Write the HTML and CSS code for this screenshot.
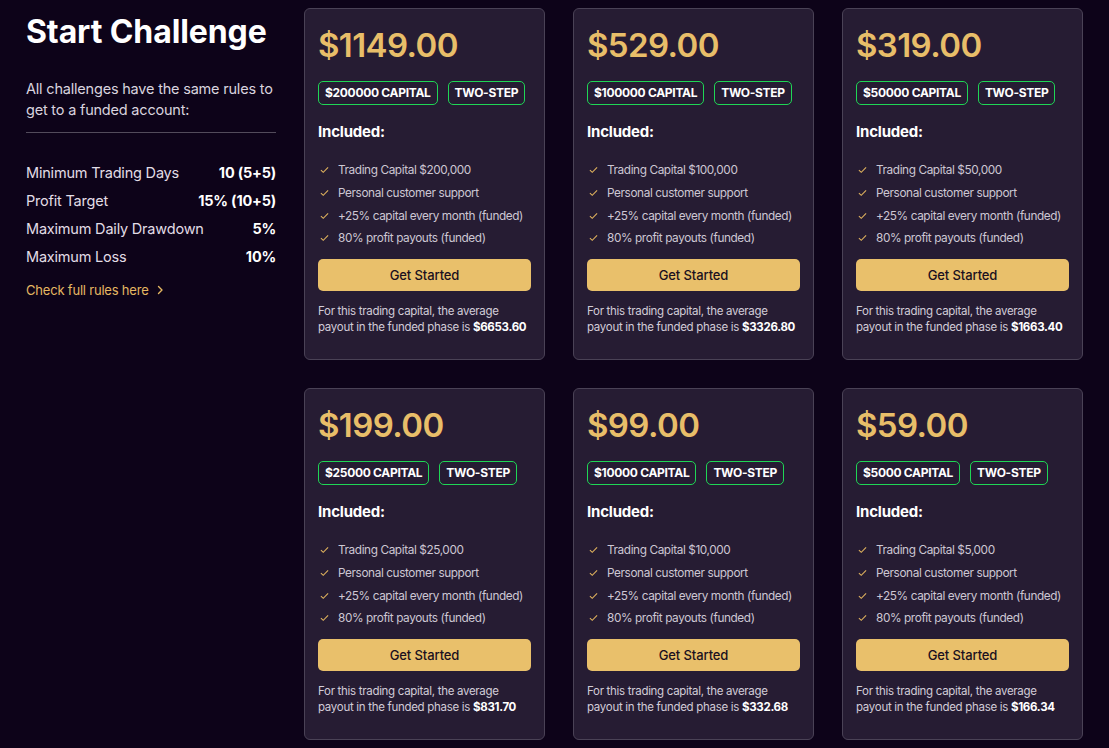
FILE: index.html
```html
<!DOCTYPE html>
<html>
<head>
<meta charset="utf-8">
<link rel="stylesheet" href="styles.css">
</head>
<body>
<div class="page">
  <aside class="intro">
    <h1 class="title">Start Challenge</h1>
    <p class="lead">All challenges have the same rules to get to a funded account:</p>
    <div class="divider"></div>
    <dl class="rules">
      <div class="rule"><dt>Minimum Trading Days</dt><dd>10 (5+5)</dd></div>
      <div class="rule"><dt>Profit Target</dt><dd>15% (10+5)</dd></div>
      <div class="rule"><dt>Maximum Daily Drawdown</dt><dd>5%</dd></div>
      <div class="rule"><dt>Maximum Loss</dt><dd>10%</dd></div>
    </dl>
    <a class="rules-link" href="#">Check full rules here <svg width="9" height="10" viewBox="0 0 9 10"><path d="M2.5 1.5 L6 5 L2.5 8.5" fill="none" stroke="currentColor" stroke-width="1.4" stroke-linecap="round" stroke-linejoin="round"/></svg></a>
  </aside>

  <main class="grid">
    <section class="card">
      <div class="price">$1149.00</div>
      <div class="badges"><span class="badge">$200000 CAPITAL</span><span class="badge">TWO-STEP</span></div>
      <h3 class="inc">Included:</h3>
      <ul class="list">
        <li><svg class="chk" viewBox="0 0 10 8"><path d="M1 4.2 L3.6 6.6 L9 1.2" fill="none" stroke="currentColor" stroke-width="1.2"/></svg><span>Trading Capital $200,000</span></li>
        <li><svg class="chk" viewBox="0 0 10 8"><path d="M1 4.2 L3.6 6.6 L9 1.2" fill="none" stroke="currentColor" stroke-width="1.2"/></svg><span>Personal customer support</span></li>
        <li><svg class="chk" viewBox="0 0 10 8"><path d="M1 4.2 L3.6 6.6 L9 1.2" fill="none" stroke="currentColor" stroke-width="1.2"/></svg><span>+25% capital every month (funded)</span></li>
        <li><svg class="chk" viewBox="0 0 10 8"><path d="M1 4.2 L3.6 6.6 L9 1.2" fill="none" stroke="currentColor" stroke-width="1.2"/></svg><span>80% profit payouts (funded)</span></li>
      </ul>
      <button class="btn">Get Started</button>
      <p class="note"><span>For this trading capital, the average payout in the funded phase is</span> <b>$6653.60</b></p>
    </section>

    <section class="card">
      <div class="price">$529.00</div>
      <div class="badges"><span class="badge">$100000 CAPITAL</span><span class="badge">TWO-STEP</span></div>
      <h3 class="inc">Included:</h3>
      <ul class="list">
        <li><svg class="chk" viewBox="0 0 10 8"><path d="M1 4.2 L3.6 6.6 L9 1.2" fill="none" stroke="currentColor" stroke-width="1.2"/></svg><span>Trading Capital $100,000</span></li>
        <li><svg class="chk" viewBox="0 0 10 8"><path d="M1 4.2 L3.6 6.6 L9 1.2" fill="none" stroke="currentColor" stroke-width="1.2"/></svg><span>Personal customer support</span></li>
        <li><svg class="chk" viewBox="0 0 10 8"><path d="M1 4.2 L3.6 6.6 L9 1.2" fill="none" stroke="currentColor" stroke-width="1.2"/></svg><span>+25% capital every month (funded)</span></li>
        <li><svg class="chk" viewBox="0 0 10 8"><path d="M1 4.2 L3.6 6.6 L9 1.2" fill="none" stroke="currentColor" stroke-width="1.2"/></svg><span>80% profit payouts (funded)</span></li>
      </ul>
      <button class="btn">Get Started</button>
      <p class="note"><span>For this trading capital, the average payout in the funded phase is</span> <b>$3326.80</b></p>
    </section>

    <section class="card">
      <div class="price">$319.00</div>
      <div class="badges"><span class="badge">$50000 CAPITAL</span><span class="badge">TWO-STEP</span></div>
      <h3 class="inc">Included:</h3>
      <ul class="list">
        <li><svg class="chk" viewBox="0 0 10 8"><path d="M1 4.2 L3.6 6.6 L9 1.2" fill="none" stroke="currentColor" stroke-width="1.2"/></svg><span>Trading Capital $50,000</span></li>
        <li><svg class="chk" viewBox="0 0 10 8"><path d="M1 4.2 L3.6 6.6 L9 1.2" fill="none" stroke="currentColor" stroke-width="1.2"/></svg><span>Personal customer support</span></li>
        <li><svg class="chk" viewBox="0 0 10 8"><path d="M1 4.2 L3.6 6.6 L9 1.2" fill="none" stroke="currentColor" stroke-width="1.2"/></svg><span>+25% capital every month (funded)</span></li>
        <li><svg class="chk" viewBox="0 0 10 8"><path d="M1 4.2 L3.6 6.6 L9 1.2" fill="none" stroke="currentColor" stroke-width="1.2"/></svg><span>80% profit payouts (funded)</span></li>
      </ul>
      <button class="btn">Get Started</button>
      <p class="note"><span>For this trading capital, the average payout in the funded phase is</span> <b>$1663.40</b></p>
    </section>

    <section class="card">
      <div class="price">$199.00</div>
      <div class="badges"><span class="badge">$25000 CAPITAL</span><span class="badge">TWO-STEP</span></div>
      <h3 class="inc">Included:</h3>
      <ul class="list">
        <li><svg class="chk" viewBox="0 0 10 8"><path d="M1 4.2 L3.6 6.6 L9 1.2" fill="none" stroke="currentColor" stroke-width="1.2"/></svg><span>Trading Capital $25,000</span></li>
        <li><svg class="chk" viewBox="0 0 10 8"><path d="M1 4.2 L3.6 6.6 L9 1.2" fill="none" stroke="currentColor" stroke-width="1.2"/></svg><span>Personal customer support</span></li>
        <li><svg class="chk" viewBox="0 0 10 8"><path d="M1 4.2 L3.6 6.6 L9 1.2" fill="none" stroke="currentColor" stroke-width="1.2"/></svg><span>+25% capital every month (funded)</span></li>
        <li><svg class="chk" viewBox="0 0 10 8"><path d="M1 4.2 L3.6 6.6 L9 1.2" fill="none" stroke="currentColor" stroke-width="1.2"/></svg><span>80% profit payouts (funded)</span></li>
      </ul>
      <button class="btn">Get Started</button>
      <p class="note"><span>For this trading capital, the average payout in the funded phase is</span> <b>$831.70</b></p>
    </section>

    <section class="card">
      <div class="price">$99.00</div>
      <div class="badges"><span class="badge">$10000 CAPITAL</span><span class="badge">TWO-STEP</span></div>
      <h3 class="inc">Included:</h3>
      <ul class="list">
        <li><svg class="chk" viewBox="0 0 10 8"><path d="M1 4.2 L3.6 6.6 L9 1.2" fill="none" stroke="currentColor" stroke-width="1.2"/></svg><span>Trading Capital $10,000</span></li>
        <li><svg class="chk" viewBox="0 0 10 8"><path d="M1 4.2 L3.6 6.6 L9 1.2" fill="none" stroke="currentColor" stroke-width="1.2"/></svg><span>Personal customer support</span></li>
        <li><svg class="chk" viewBox="0 0 10 8"><path d="M1 4.2 L3.6 6.6 L9 1.2" fill="none" stroke="currentColor" stroke-width="1.2"/></svg><span>+25% capital every month (funded)</span></li>
        <li><svg class="chk" viewBox="0 0 10 8"><path d="M1 4.2 L3.6 6.6 L9 1.2" fill="none" stroke="currentColor" stroke-width="1.2"/></svg><span>80% profit payouts (funded)</span></li>
      </ul>
      <button class="btn">Get Started</button>
      <p class="note"><span>For this trading capital, the average payout in the funded phase is</span> <b>$332.68</b></p>
    </section>

    <section class="card">
      <div class="price">$59.00</div>
      <div class="badges"><span class="badge">$5000 CAPITAL</span><span class="badge">TWO-STEP</span></div>
      <h3 class="inc">Included:</h3>
      <ul class="list">
        <li><svg class="chk" viewBox="0 0 10 8"><path d="M1 4.2 L3.6 6.6 L9 1.2" fill="none" stroke="currentColor" stroke-width="1.2"/></svg><span>Trading Capital $5,000</span></li>
        <li><svg class="chk" viewBox="0 0 10 8"><path d="M1 4.2 L3.6 6.6 L9 1.2" fill="none" stroke="currentColor" stroke-width="1.2"/></svg><span>Personal customer support</span></li>
        <li><svg class="chk" viewBox="0 0 10 8"><path d="M1 4.2 L3.6 6.6 L9 1.2" fill="none" stroke="currentColor" stroke-width="1.2"/></svg><span>+25% capital every month (funded)</span></li>
        <li><svg class="chk" viewBox="0 0 10 8"><path d="M1 4.2 L3.6 6.6 L9 1.2" fill="none" stroke="currentColor" stroke-width="1.2"/></svg><span>80% profit payouts (funded)</span></li>
      </ul>
      <button class="btn">Get Started</button>
      <p class="note"><span>For this trading capital, the average payout in the funded phase is</span> <b>$166.34</b></p>
    </section>
  </main>
</div>
</body>
</html>
```

FILE: styles.css
```css
* { box-sizing: border-box; }
html, body { margin: 0; padding: 0; }
body {
  background: #0d0319;
  color: #ffffff;
  font-family: "Inter", "Lato", sans-serif;
  width: 1109px;
  height: 748px;
  overflow: hidden;
}
.page {
  display: flex;
  align-items: flex-start;
  padding: 8px 0 0 26px;
  gap: 28px;
}
.intro {
  width: 250px;
  flex: none;
}
.title {
  margin: 0;
  padding-top: 5px;
  font-size: 32px;
  font-weight: 700;
  line-height: 38px;
  letter-spacing: -0.1px;
}
.lead {
  margin: 27px 0 0;
  font-size: 14.5px;
  line-height: 21px;
  color: #d9d3df;
  letter-spacing: -0.2px;
}
.divider {
  height: 1px;
  background: #524b5b;
  margin-top: 12px;
}
.rules {
  margin: 26px 0 0;
}
.rule {
  display: flex;
  justify-content: space-between;
  height: 27.8px;
  align-items: center;
  font-size: 14.5px;
  letter-spacing: -0.2px;
}
.rule dt { color: #e2dde6; }
.rule dd { margin: 0; font-weight: 700; color: #fff; }
.rules-link {
  display: inline-flex;
  align-items: center;
  gap: 7px;
  margin-top: 12px;
  font-size: 13px;
  color: #e5b862;
  text-decoration: none;
  letter-spacing: -0.2px;
}
.grid {
  display: grid;
  grid-template-columns: repeat(3, 241px);
  gap: 28px 28px;
}
.card {
  background: #261c33;
  border: 1px solid #4a4256;
  border-radius: 6px;
  height: 352px;
  padding: 14px 13px 0;
}
.price {
  font-size: 33px;
  font-weight: 600;
  color: #e8be69;
  line-height: 44px;
  letter-spacing: -0.6px;
}
.badges {
  display: flex;
  gap: 10px;
  margin-top: 14px;
}
.badge {
  border: 1.5px solid #1fd655;
  border-radius: 5px;
  font-size: 12px;
  font-weight: 700;
  height: 24px;
  line-height: 21px;
  padding: 0 6px;
  color: #fff;
  letter-spacing: -0.3px;
  white-space: nowrap;
}
.inc {
  margin: 15px 0 0;
  font-size: 15px;
  font-weight: 700;
  line-height: 24px;
  letter-spacing: -0.2px;
}
.list {
  list-style: none;
  padding: 0;
  margin: 15px 0 0;
}
.list li {
  display: flex;
  align-items: center;
  height: 22.7px;
  font-size: 11.8px;
  color: #cdc7d3;
  white-space: nowrap;
  letter-spacing: -0.4px;
}
.chk {
  width: 9px;
  height: 8px;
  color: #e0b35e;
  margin: 0 9px 0 2px;
  flex: none;
}
.btn {
  display: block;
  width: 100%;
  height: 32px;
  margin-top: 9px;
  border: 0;
  border-radius: 5px;
  background: #e9c06b;
  color: #1a1020;
  font-family: inherit;
  font-size: 13px;
  font-weight: 500;
  letter-spacing: -0.1px;
}
.note {
  margin: 12px 0 0;
  font-size: 11.5px;
  line-height: 16px;
  color: #d2ccd8;
  letter-spacing: -0.3px;
}
.note b { color: #fff; font-weight: 700; }
```
